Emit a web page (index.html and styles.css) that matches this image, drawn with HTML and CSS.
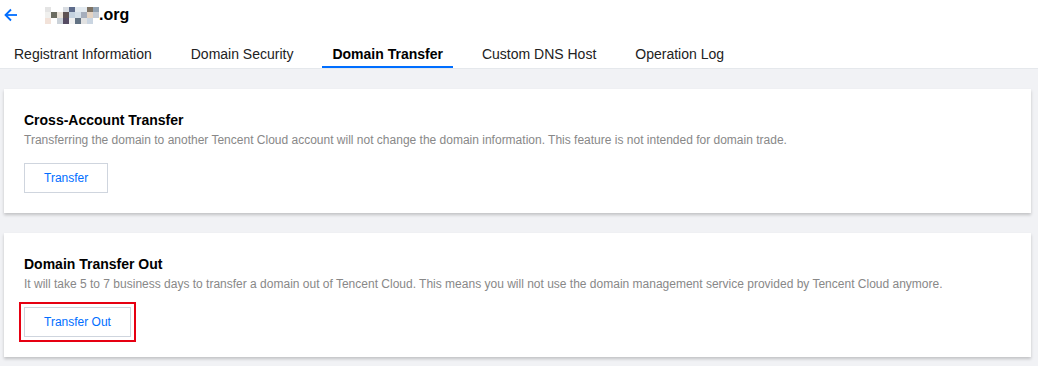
FILE: index.html
```html
<!DOCTYPE html>
<html lang="en">
<head>
  <meta charset="UTF-8">
  <title>Domain Transfer</title>
  <link rel="stylesheet" href="styles.css">
</head>
<body>
  <header class="topbar">
    <a href="#" class="back" aria-label="Back">
      <svg width="14" height="14" viewBox="0 0 14 14" fill="none" stroke="#006eff" stroke-width="1.8">
        <path d="M13 7H2"/>
        <path d="M7 1.5L1.5 7L7 12.5"/>
      </svg>
    </a>
    <h1 class="domain">
      <svg class="masked" width="54" height="17" viewBox="0 0 54 17">
        <rect x="0" y="0" width="6" height="5" fill="#e4e4e4"/>
        <rect x="18" y="0" width="6" height="5" fill="#d9dde2"/>
        <rect x="24" y="0" width="6" height="5" fill="#5d6b8b"/>
        <rect x="30" y="0" width="6" height="5" fill="#e2e9ef"/>
        <rect x="36" y="0" width="6" height="5" fill="#e3eaf0"/>
        <rect x="42" y="0" width="6" height="5" fill="#7d7263"/>
        <rect x="48" y="0" width="6" height="5" fill="#93a3b3"/>
        <rect x="0" y="5" width="6" height="6" fill="#f0f0ee"/>
        <rect x="6" y="5" width="6" height="6" fill="#6c6c62"/>
        <rect x="12" y="5" width="6" height="6" fill="#ebe3da"/>
        <rect x="18" y="5" width="6" height="6" fill="#5e5252"/>
        <rect x="24" y="5" width="6" height="6" fill="#c4d2e0"/>
        <rect x="30" y="5" width="6" height="6" fill="#d4dfe9"/>
        <rect x="36" y="5" width="6" height="6" fill="#a6aebc"/>
        <rect x="42" y="5" width="6" height="6" fill="#e4d3c2"/>
        <rect x="48" y="5" width="6" height="6" fill="#c5ccd4"/>
        <rect x="0" y="11" width="6" height="6" fill="#f2e2d9"/>
        <rect x="12" y="11" width="6" height="6" fill="#cbd2d9"/>
        <rect x="18" y="11" width="6" height="6" fill="#554b62"/>
        <rect x="24" y="11" width="6" height="6" fill="#f1f1f1"/>
        <rect x="30" y="11" width="6" height="6" fill="#627283"/>
        <rect x="36" y="11" width="6" height="6" fill="#e2e2e2"/>
        <rect x="42" y="11" width="6" height="6" fill="#cad5e1"/>
      </svg>.org
    </h1>
  </header>

  <nav class="tabs">
    <a href="#" class="tab">Registrant Information</a>
    <a href="#" class="tab">Domain Security</a>
    <a href="#" class="tab active">Domain Transfer</a>
    <a href="#" class="tab">Custom DNS Host</a>
    <a href="#" class="tab">Operation Log</a>
  </nav>

  <main class="content">
    <section class="card">
      <h2>Cross-Account Transfer</h2>
      <p>Transferring the domain to another Tencent Cloud account will not change the domain information. This feature is not intended for domain trade.</p>
      <button class="btn">Transfer</button>
    </section>

    <section class="card">
      <h2>Domain Transfer Out</h2>
      <p>It will take 5 to 7 business days to transfer a domain out of Tencent Cloud. This means you will not use the domain management service provided by Tencent Cloud anymore.</p>
      <button class="btn highlighted">Transfer Out</button>
    </section>
  </main>
</body>
</html>
```

FILE: styles.css
```css
body {
  font-family: "Liberation Sans", Arial, sans-serif;
  margin: 0;
  padding: 0;
  color: #000;
  background-color: #fff;
  height: 366px;
  overflow: hidden;
}

.topbar {
  display: flex;
  align-items: center;
  height: 30px;
  padding-left: 4px;
}

.back {
  display: flex;
  width: 14px;
  height: 14px;
}

.domain {
  display: flex;
  align-items: center;
  margin: 0 0 0 27px;
  font-size: 16px;
  font-weight: bold;
  color: #000;
}

.masked {
  display: block;
}

.tabs {
  display: flex;
  gap: 19px;
  margin-top: 8px;
  padding-left: 4px;
  border-bottom: 1px solid #e5e8ec;
}

.tab {
  padding: 4px 10px 0;
  line-height: 24px;
  font-size: 14px;
  color: #222;
  text-decoration: none;
  border-bottom: 2px solid transparent;
}

.tab.active {
  font-weight: bold;
  color: #000;
  border-bottom-color: #006eff;
}

.content {
  background-color: #f1f2f5;
  padding: 20px 7px 9px 4px;
  display: flex;
  flex-direction: column;
  gap: 20px;
}

.card {
  background-color: #fff;
  padding: 20px;
  box-shadow: 0 2px 3px rgba(0, 0, 0, 0.2);
}

.card h2 {
  margin: 0;
  font-size: 14px;
  line-height: 22px;
  font-weight: bold;
}

.card p {
  margin: 0;
  font-size: 12px;
  line-height: 18px;
  color: #888;
}

.btn {
  margin-top: 14px;
  height: 30px;
  padding: 0 19px;
  font-family: inherit;
  font-size: 12px;
  color: #006eff;
  background: #fff;
  border: 1px solid #cfd5de;
  cursor: pointer;
}

.btn.highlighted {
  outline: 2px solid #e60012;
  outline-offset: 3px;
}
```
